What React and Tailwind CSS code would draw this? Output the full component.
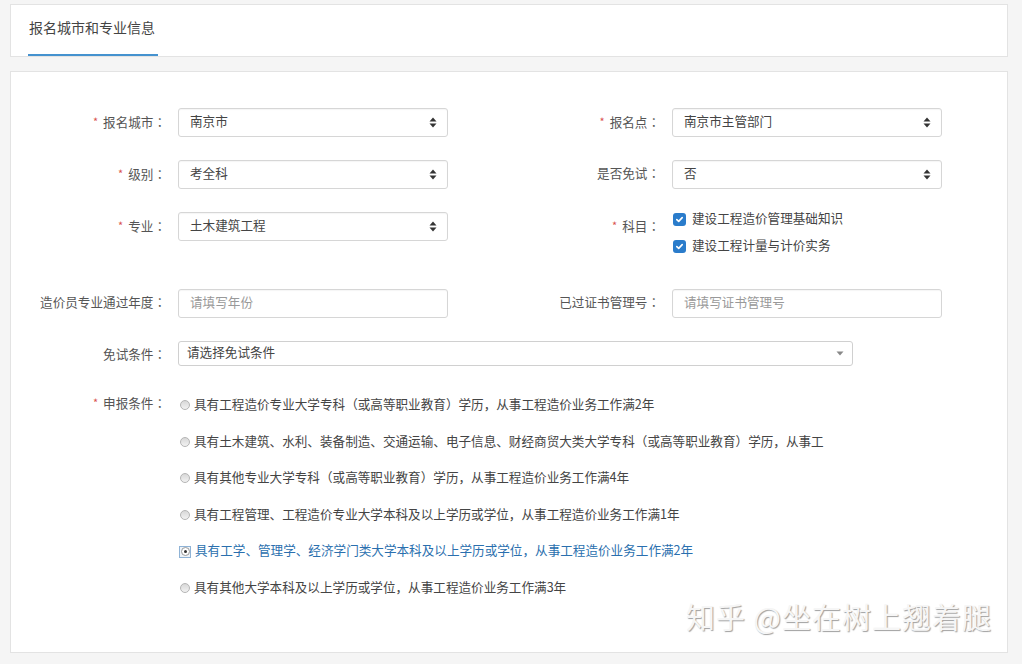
import React from 'react';

const FONT = { fontFamily: '"Microsoft YaHei", "Noto Sans CJK SC", "Noto Sans", sans-serif' };

const SortArrows = () => (
  <svg width="8" height="11" viewBox="0 0 8 11" className="shrink-0">
    <path d="M4 0.5 L7.5 4.5 L0.5 4.5 Z" fill="#333" />
    <path d="M4 10.5 L7.5 6.5 L0.5 6.5 Z" fill="#333" />
  </svg>
);

// full-width colon centred like the reference font
const Colon = () => (
  <span className="font-['Noto_Sans_CJK_TC',sans-serif]">：</span>
);

const Label = ({ req, children }) => (
  <div className="w-[167px] shrink-0 pr-[12px] text-right text-[12.6px] text-[#555] leading-[26px]">
    {req && <span className="text-[#d9534f] mr-[5px] text-[11px] align-[1px]">*</span>}
    {children}<Colon />
  </div>
);

const Select = ({ value, w = 'w-[270px]' }) => (
  <div className={`${w} h-[29px] flex items-center justify-between rounded-[3px] border border-[#d6d6d6] bg-white pl-[11px] pr-[10px] shadow-[inset_0_1px_1px_rgba(0,0,0,0.04)]`}>
    <span className="text-[12.6px] text-[#444] leading-none pb-[3px]">{value}</span>
    <SortArrows />
  </div>
);

const Input = ({ placeholder }) => (
  <div className="w-[270px] h-[29px] flex items-center rounded-[3px] border border-[#d6d6d6] bg-white pl-[11px] shadow-[inset_0_1px_1px_rgba(0,0,0,0.04)]">
    <span className="text-[12.6px] text-[#999] leading-none pb-[3px]">{placeholder}</span>
  </div>
);

const Check = ({ children }) => (
  <div className="flex items-center h-[27px]">
    <span className="w-[13px] h-[13px] rounded-[3px] bg-[#2a7ccb] flex items-center justify-center">
      <svg width="9" height="9" viewBox="0 0 9 9">
        <path d="M1.8 4.6 L3.7 6.4 L7.2 2.6" stroke="#fff" strokeWidth="1.6" fill="none" strokeLinecap="round" strokeLinejoin="round" />
      </svg>
    </span>
    <span className="ml-[6px] text-[12.6px] text-[#444] leading-none pb-[2px]">{children}</span>
  </div>
);

const Radio = ({ checked, children }) => (
  <div className="h-[36.6px] flex items-center">
    {checked ? (
      <span className="w-[12px] h-[12px] flex items-center justify-center border border-[#8fb3d6] bg-[#eef4fa]">
        <span className="w-[9px] h-[9px] rounded-full border border-[#9a9a9a] bg-white flex items-center justify-center">
          <span className="w-[3px] h-[3px] rounded-full bg-[#333]" />
        </span>
      </span>
    ) : (
      <span className="w-[10px] h-[10px] ml-[1px] rounded-full border border-[#b5b5b5] bg-gradient-to-b from-[#d8d8d8] to-[#f2f2f2]" />
    )}
    <span className={`ml-[4px] text-[12.6px] whitespace-nowrap leading-none pb-[2px] ${checked ? 'text-[#2a6fae]' : 'text-[#444]'}`}>{children}</span>
  </div>
);

const conditions = [
  '具有工程造价专业大学专科（或高等职业教育）学历，从事工程造价业务工作满2年',
  '具有土木建筑、水利、装备制造、交通运输、电子信息、财经商贸大类大学专科（或高等职业教育）学历，从事工',
  '具有其他专业大学专科（或高等职业教育）学历，从事工程造价业务工作满4年',
  '具有工程管理、工程造价专业大学本科及以上学历或学位，从事工程造价业务工作满1年',
  '具有工学、管理学、经济学门类大学本科及以上学历或学位，从事工程造价业务工作满2年',
  '具有其他大学本科及以上学历或学位，从事工程造价业务工作满3年',
];

export default function App() {
  return (
    <div className="min-h-[664px] bg-[#f5f5f5] pl-[10px] pr-[14px] pt-[4px]" style={FONT}>
      {/* Tab header */}
      <div className="h-[53px] bg-white border border-[#e3e3e3] pl-[17px] flex items-end">
        <div className="w-[130px] border-b-2 border-[#4592cf] h-[52px] flex items-center pl-[1px] pb-[3px]">
          <span className="text-[14px] text-[#444]">报名城市和专业信息</span>
        </div>
      </div>

      {/* Form card */}
      <div className="relative mt-[14px] h-[582px] bg-white border border-[#e3e3e3] pt-[36px]">
        <div className="grid grid-cols-[494px_1fr]">
          <div className="flex h-[29px]"><Label req>报名城市</Label><Select value="南京市" /></div>
          <div className="flex h-[29px]"><Label req>报名点</Label><Select value="南京市主管部门" /></div>
        </div>
        <div className="grid grid-cols-[494px_1fr] mt-[23px]">
          <div className="flex h-[29px]"><Label req>级别</Label><Select value="考全科" /></div>
          <div className="flex h-[29px]"><Label>是否免试</Label><Select value="否" /></div>
        </div>
        <div className="grid grid-cols-[494px_1fr] mt-[23px] h-[45px]">
          <div className="flex h-[29px]"><Label req>专业</Label><Select value="土木建筑工程" /></div>
          <div className="flex">
            <Label req>科目</Label>
            <div className="-mt-[6px] pl-[1px]">
              <Check>建设工程造价管理基础知识</Check>
              <Check>建设工程计量与计价实务</Check>
            </div>
          </div>
        </div>
        <div className="grid grid-cols-[494px_1fr] mt-[32px]">
          <div className="flex h-[29px]"><Label>造价员专业通过年度</Label><Input placeholder="请填写年份" /></div>
          <div className="flex h-[29px]"><Label>已过证书管理号</Label><Input placeholder="请填写证书管理号" /></div>
        </div>
        <div className="flex mt-[23px] h-[25px] items-center">
          <div className="w-[167px] shrink-0 pr-[12px] text-right text-[12.6px] text-[#555] leading-[22px]">免试条件<Colon /></div>
          <div className="w-[675px] h-[25px] flex items-center justify-between rounded-[3px] border border-[#d0d0d0] bg-white pl-[8px] pr-[8px]">
            <span className="text-[12.6px] text-[#444] leading-none pb-[2px]">请选择免试条件</span>
            <svg width="8" height="5" viewBox="0 0 8 5"><path d="M0.5 0.5 L7.5 0.5 L4 4.5 Z" fill="#888" /></svg>
          </div>
        </div>
        <div className="flex mt-[21px]">
          <div className="w-[167px] shrink-0 pr-[12px] text-right text-[12.6px] text-[#555] leading-[30px]">
            <span className="text-[#d9534f] mr-[5px] text-[11px] align-[1px]">*</span>申报条件<Colon />
          </div>
          <div className="pl-[1px]">
            {conditions.map((c, i) => (
              <Radio key={i} checked={i === 4}>{c}</Radio>
            ))}
          </div>
        </div>

        {/* watermark */}
        <div className="absolute left-[675px] top-[523px] text-[29px] tracking-[1px] text-[#f6f6f6] [text-shadow:1px_1px_1px_#a0a0a0]">
          知乎 @坐在树上翘着腿
        </div>
      </div>
    </div>
  );
}
